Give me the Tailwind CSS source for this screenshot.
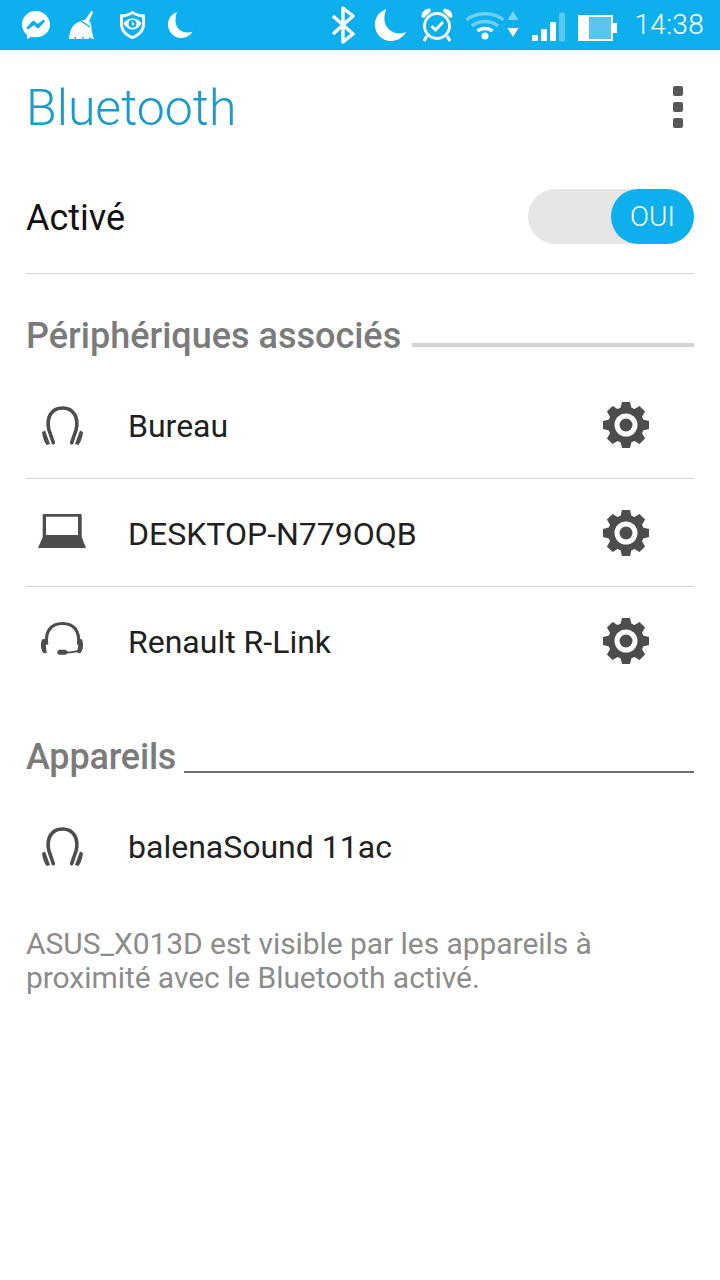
<!DOCTYPE html>
<html lang="fr">
<head>
  <meta charset="UTF-8">
  <meta name="viewport" content="width=device-width, initial-scale=1.0">
  <title>Bluetooth</title>
  <script src="https://cdn.jsdelivr.net/npm/@tailwindcss/browser@4"></script>
</head>
<body class="bg-white w-[720px] h-[1280px] overflow-hidden font-['Roboto',sans-serif]">
  <!-- shared icons -->
  <svg class="hidden">
    <symbol id="gear" viewBox="0 0 48 48">
      <g fill="#4d4d4d">
        <circle cx="24" cy="24" r="18"/>
        <polygon id="tooth" points="18,9 20,1 28,1 30,9"/>
        <polygon points="18,9 20,1 28,1 30,9" transform="rotate(45 24 24)"/>
        <polygon points="18,9 20,1 28,1 30,9" transform="rotate(90 24 24)"/>
        <polygon points="18,9 20,1 28,1 30,9" transform="rotate(135 24 24)"/>
        <polygon points="18,9 20,1 28,1 30,9" transform="rotate(180 24 24)"/>
        <polygon points="18,9 20,1 28,1 30,9" transform="rotate(225 24 24)"/>
        <polygon points="18,9 20,1 28,1 30,9" transform="rotate(270 24 24)"/>
        <polygon points="18,9 20,1 28,1 30,9" transform="rotate(315 24 24)"/>
      </g>
      <circle cx="24" cy="24" r="11.500" fill="#fff"/>
      <circle cx="24" cy="24" r="6.500" fill="#4d4d4d"/>
    </symbol>
    <symbol id="headphones" viewBox="0 0 41 41">
      <path fill="none" stroke="#4d4d4d" stroke-width="3.600" stroke-linecap="round" stroke-linejoin="round" d="M11.300 36.700L7 24C4 12 9 2 20.500 2S37 12 34 24l-4.300 12.700"/>
      <path fill="#4d4d4d" d="M0 26l3-1.500L8 38l-3.500 1C2 35.500.5 31 0 26zM41 26l-3-1.500L33 38l3.500 1C39 35.500 40.500 31 41 26z"/>
    </symbol>
  </svg>

  <!-- status bar -->
  <div class="h-[50px] bg-[#0db0ec] flex items-center text-white">
    <div class="flex items-center pl-[21px]">
      <svg class="w-[30px] h-[30px]" viewBox="0 0 30 30"><path fill="#fff" d="M15 1C7 1 1 7 1 14.500c0 4.200 1.900 7.800 5 10.200V29l4.300-2.300c1.500.4 3 .6 4.700.6 8 0 14-5.800 14-12.800S23 1 15 1z"/><path fill="none" stroke="#0db0ec" stroke-width="2.600" stroke-linejoin="round" d="M7 18l5.500-6 4 3.500 6-4.500-5.500 6-4-3.500z"/></svg>
      <svg class="w-[32px] h-[30px] ml-[17px]" viewBox="0 0 32 30"><path fill="#fff" d="M1 29c.5-6 2-11 5-14 3-3 8-5 11-5l6-8.500c.8-1 2.500 0 2 1.200L21 11c2 2 2.500 4 2.500 7 0 4 1.500 8.500 2.500 11l-3-.5-1-2-1 2.500H16l-1-3-1 3H8l-.5-3-1.500 3z"/><path fill="none" stroke="#0db0ec" stroke-width="1.500" d="M13 11l9 6"/></svg>
      <svg class="w-[27px] h-[30px] ml-[19px]" viewBox="0 0 27 30"><path fill="#fff" d="M13.500 1C10 3.500 6 4.500 1 4.500V14c0 7 5 12.500 12.500 15C21 26.500 26 21 26 14V4.500C21 4.500 17 3.500 13.500 1z"/><path fill="#0db0ec" d="M13.500 4C10.500 6 7 7 4 7.200V14c0 5.500 4 10 9.500 12C19 24 23 19.500 23 14V7.200C20 7 16.500 6 13.500 4z"/><path fill="#fff" d="M4.500 13.500C7 10 10 8.500 13.500 8.500S20 10 22.500 13.500C20 17.500 17 19.500 13.500 19.500S7 17.500 4.500 13.500z"/><circle cx="13.500" cy="13.800" r="4" fill="#0db0ec"/><path fill="#fff" d="M13 11.500l2.500 2.300-2.500 2.300z"/></svg>
      <svg class="w-[26px] h-[28px] ml-[21px]" viewBox="0 0 26 28"><path fill="#fff" d="M10 1C4 3 1 8 1 13.500 1 21 7 27 14 27c5 0 9.500-2.500 11.500-6.500-1.500.8-3.500 1-5 1C13 21.500 8.500 16 8.500 10c0-3.500.5-6.500 1.500-9z"/></svg>
    </div>
    <div class="ml-auto flex items-center pr-[16px]">
      <svg class="w-[24px] h-[38px]" viewBox="0 0 24 38"><path fill="none" stroke="#fff" stroke-width="3.400" stroke-linejoin="round" d="M2 10l20 18-10 8V2l10 8L2 28"/></svg>
      <svg class="w-[34px] h-[34px] ml-[19px]" viewBox="0 0 36 36"><path fill="#fff" d="M13 1C5 4 1 10 1 18c0 9.500 7.500 17 17 17 7 0 13-4 16-9.500-2 1-4 1.500-6.500 1.500C18 27 11 20 11 11c0-3.500.6-7 2-10z"/></svg>
      <svg class="w-[34px] h-[36px] ml-[12px]" viewBox="0 0 34 36"><circle cx="17" cy="19" r="12.500" fill="none" stroke="#fff" stroke-width="2.800"/><path fill="#fff" d="M1.500 10C1.500 5 5 1.500 10 1.500l1 2.500-7 7zM32.500 10C32.500 5 29 1.500 24 1.500L23 4l7 7z"/><path fill="none" stroke="#fff" stroke-width="3" d="M7 29l-3 5M27 29l3 5"/><path fill="none" stroke="#fff" stroke-width="2.800" d="M11.500 19l4 4 7.500-8"/></svg>
      <svg class="w-[40px] h-[32px] ml-[11px]" viewBox="0 0 40 30"><path fill="none" stroke="#fff" stroke-opacity="0.400" stroke-width="3.500" d="M1.500 10C11 1.500 29 1.500 38.500 10M7 16c7-6 19-6 26 0"/><path fill="none" stroke="#fff" stroke-width="3.500" d="M12.500 21c4-3.500 11-3.500 15 0"/><circle cx="20" cy="26" r="3.500" fill="#fff"/></svg>
      <svg class="w-[12px] h-[30px] ml-[2px]" viewBox="0 0 12 30"><path fill="#fff" fill-opacity="0.450" d="M6 1l5.500 9H.5z"/><path fill="#fff" d="M6 27L.5 18h11z"/></svg>
      <svg class="w-[34px] h-[30px] ml-[13px] mt-[4px]" viewBox="0 0 34 30"><rect x="0" y="23" width="6" height="6" rx="1" fill="#fff"/><rect x="9" y="17" width="6" height="12" rx="1" fill="#fff"/><rect x="18" y="10" width="6" height="19" rx="1" fill="#fff"/><rect x="27.500" y="1" width="5" height="28" rx="1" fill="#fff" fill-opacity="0.300" stroke="#fff" stroke-opacity="0.200"/></svg>
      <svg class="w-[39px] h-[30px] ml-[12px] mt-[5px]" viewBox="0 0 39 30"><rect x="0" y="2" width="35" height="26" fill="#fff"/><rect x="11" y="4" width="22" height="22" fill="#58c6f1"/><rect x="35" y="10" width="4" height="10" fill="#fff"/></svg>
      <span class="ml-[17px] text-[28px] leading-none font-light tracking-[0.3px]">14:38</span>
    </div>
  </div>

  <!-- title -->
  <div class="h-[109px] pt-[6px] pl-[26px] pr-[37px] flex items-center justify-between">
    <h1 class="text-[50px] leading-none font-light text-[#1a9bc9]">Bluetooth</h1>
    <div class="flex flex-col gap-[6px] -mt-[2px]">
      <span class="w-[10px] h-[10px] rounded-[2px] bg-[#575757]"></span>
      <span class="w-[10px] h-[10px] rounded-[2px] bg-[#575757]"></span>
      <span class="w-[10px] h-[10px] rounded-[2px] bg-[#575757]"></span>
    </div>
  </div>

  <div class="mx-[26px]">
    <!-- toggle row -->
    <div class="h-[115px] flex items-center justify-between border-b border-[#d3d3d3] pt-[1px]">
      <span class="text-[36px] leading-none text-[#111] mt-[2px]">Activé</span>
      <div class="w-[166px] h-[55px] rounded-full bg-[#e6e6e6] flex justify-end">
        <div class="w-[83px] h-[55px] rounded-full bg-[#0db0ec] flex items-center justify-center text-white text-[28px] font-light">OUI</div>
      </div>
    </div>

    <!-- paired devices -->
    <div class="h-[62px] mt-[31px] flex items-center gap-[11px]">
      <span class="text-[36px] leading-none font-medium text-[#7b7b7b]">Périphériques associés</span>
      <span class="flex-1 h-[4px] bg-[#d4d4d6] mt-[18px]"></span>
    </div>

    <div class="h-[112px] flex items-center border-b border-[#d3d3d3] pt-[7px]">
      <span class="w-[102px] pl-[16px] flex">
        <svg class="w-[41px] h-[41px]"><use href="#headphones"/></svg>
      </span>
      <span class="flex-1 text-[32px] leading-none text-[#212121]">Bureau</span>
      <svg class="w-[48px] h-[48px] mr-[44px] -mt-[2px]"><use href="#gear"/></svg>
    </div>

    <div class="h-[108px] flex items-center border-b border-[#d3d3d3] pt-[2px]">
      <span class="w-[102px] pl-[12px] flex -mt-[5px]">
        <svg class="w-[48px] h-[34px]" viewBox="0 0 48 34"><path fill="#4d4d4d" fill-rule="evenodd" d="M4.700 1.200C4.700.5 5.200 0 5.900 0h36.600c.7 0 1.200.5 1.200 1.200V23L48 34H0l4.700-11zM8 2.700V21h32V2.700z"/></svg>
      </span>
      <span class="flex-1 text-[32px] leading-none text-[#212121]">DESKTOP-N779OQB</span>
      <svg class="w-[48px] h-[48px] mr-[44px] -mt-[2px]"><use href="#gear"/></svg>
    </div>

    <div class="h-[108px] flex items-center pt-[2px]">
      <span class="w-[102px] pl-[14px] flex -mt-[4px]">
        <svg class="w-[44px] h-[38px]" viewBox="0 0 44 38"><path fill="none" stroke="#4d4d4d" stroke-width="3.200" d="M6.700 23.700C5 10 11 2.500 22.500 2.500s17.500 7.500 16 21.200"/><path fill="#4d4d4d" d="M2 18.500l3-.8 1.700 14.300-3 .3C1 29 0 24 2 18.500zM42 18.500l-3-.8L37.300 32l3 .3C43 29 44 24 42 18.500z"/><path fill="none" stroke="#4d4d4d" stroke-width="2" d="M39.300 29c-3 1.800-7 2.500-13 2.500"/><rect x="17.300" y="28.700" width="10" height="5" rx="2.500" fill="#4d4d4d"/></svg>
      </span>
      <span class="flex-1 text-[32px] leading-none text-[#212121]">Renault R-Link</span>
      <svg class="w-[48px] h-[48px] mr-[44px] -mt-[2px]"><use href="#gear"/></svg>
    </div>

    <!-- other devices -->
    <div class="h-[62px] flex items-center gap-[8px] mt-[31px]">
      <span class="text-[36px] leading-none font-medium text-[#7b7b7b] tracking-[-0.2px]">Appareils</span>
      <span class="flex-1 h-[2px] bg-[#6f6f6f] mt-[30px]"></span>
    </div>

    <div class="h-[118px] flex items-center">
      <span class="w-[102px] pl-[16px] flex">
        <svg class="w-[41px] h-[41px]"><use href="#headphones"/></svg>
      </span>
      <span class="flex-1 text-[32px] leading-none text-[#212121]">balenaSound 11ac</span>
    </div>

    <p class="mt-[21px] text-[30px] leading-[34px] text-[#8c8c8c] tracking-[-0.06px]">ASUS_X013D est visible par les appareils à<br>proximité avec le Bluetooth activé.</p>
  </div>
</body>
</html>
